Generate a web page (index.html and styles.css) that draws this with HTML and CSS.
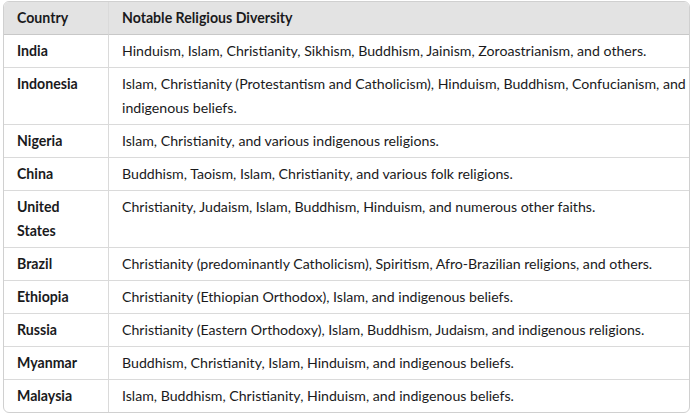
FILE: index.html
```html
<!DOCTYPE html>
<html>
<head>
<meta charset="utf-8">
<link rel="stylesheet" href="styles.css">
</head>
<body>
<div class="wrap">
<table class="tbl">
<thead>
<tr><th class="c1">Country</th><th class="c2">Notable Religious Diversity</th></tr>
</thead>
<tbody>
<tr><td class="c1">India</td><td class="c2">Hinduism, Islam, Christianity, Sikhism, Buddhism, Jainism, Zoroastrianism, and others.</td></tr>
<tr><td class="c1">Indonesia</td><td class="c2">Islam, Christianity (Protestantism and Catholicism), Hinduism, Buddhism, Confucianism, and indigenous beliefs.</td></tr>
<tr><td class="c1">Nigeria</td><td class="c2">Islam, Christianity, and various indigenous religions.</td></tr>
<tr><td class="c1">China</td><td class="c2">Buddhism, Taoism, Islam, Christianity, and various folk religions.</td></tr>
<tr><td class="c1">United States</td><td class="c2">Christianity, Judaism, Islam, Buddhism, Hinduism, and numerous other faiths.</td></tr>
<tr><td class="c1">Brazil</td><td class="c2">Christianity (predominantly Catholicism), Spiritism, Afro-Brazilian religions, and others.</td></tr>
<tr><td class="c1">Ethiopia</td><td class="c2">Christianity (Ethiopian Orthodox), Islam, and indigenous beliefs.</td></tr>
<tr><td class="c1">Russia</td><td class="c2">Christianity (Eastern Orthodoxy), Islam, Buddhism, Judaism, and indigenous religions.</td></tr>
<tr><td class="c1">Myanmar</td><td class="c2">Buddhism, Christianity, Islam, Hinduism, and indigenous beliefs.</td></tr>
<tr><td class="c1">Malaysia</td><td class="c2">Islam, Buddhism, Christianity, Hinduism, and indigenous beliefs.</td></tr>
</tbody>
</table>
</div>
</body>
</html>
```
FILE: styles.css
```css
html, body {
  margin: 0;
  padding: 0;
  background: #ffffff;
}
body {
  font-family: "Lato", "Segoe UI", sans-serif;
  font-size: 14.15px;
  color: #1a1a1c;
}
.wrap {
  padding: 1px 1px 0 3px;
}
.tbl {
  width: 687px;
  border-collapse: separate;
  border-spacing: 0;
  border: 1px solid #d0d0d0;
  border-radius: 6px;
  overflow: hidden;
}
.tbl th, .tbl td {
  text-align: left;
  vertical-align: top;
  padding: 4px 13px;
  line-height: 24px;
  border-bottom: 1px solid #dadada;
}
.tbl tr:last-child td {
  border-bottom: none;
}
.tbl th {
  background: #e3e3e3;
  font-weight: 700;
  border-bottom: 1px solid #c8c8c8;
}
.tbl td.c1 {
  font-weight: 700;
}
.tbl .c1 {
  width: 78px;
  border-right: 1px solid #dadada;
}
.tbl .c2 {
  padding-right: 2px;
}
```
